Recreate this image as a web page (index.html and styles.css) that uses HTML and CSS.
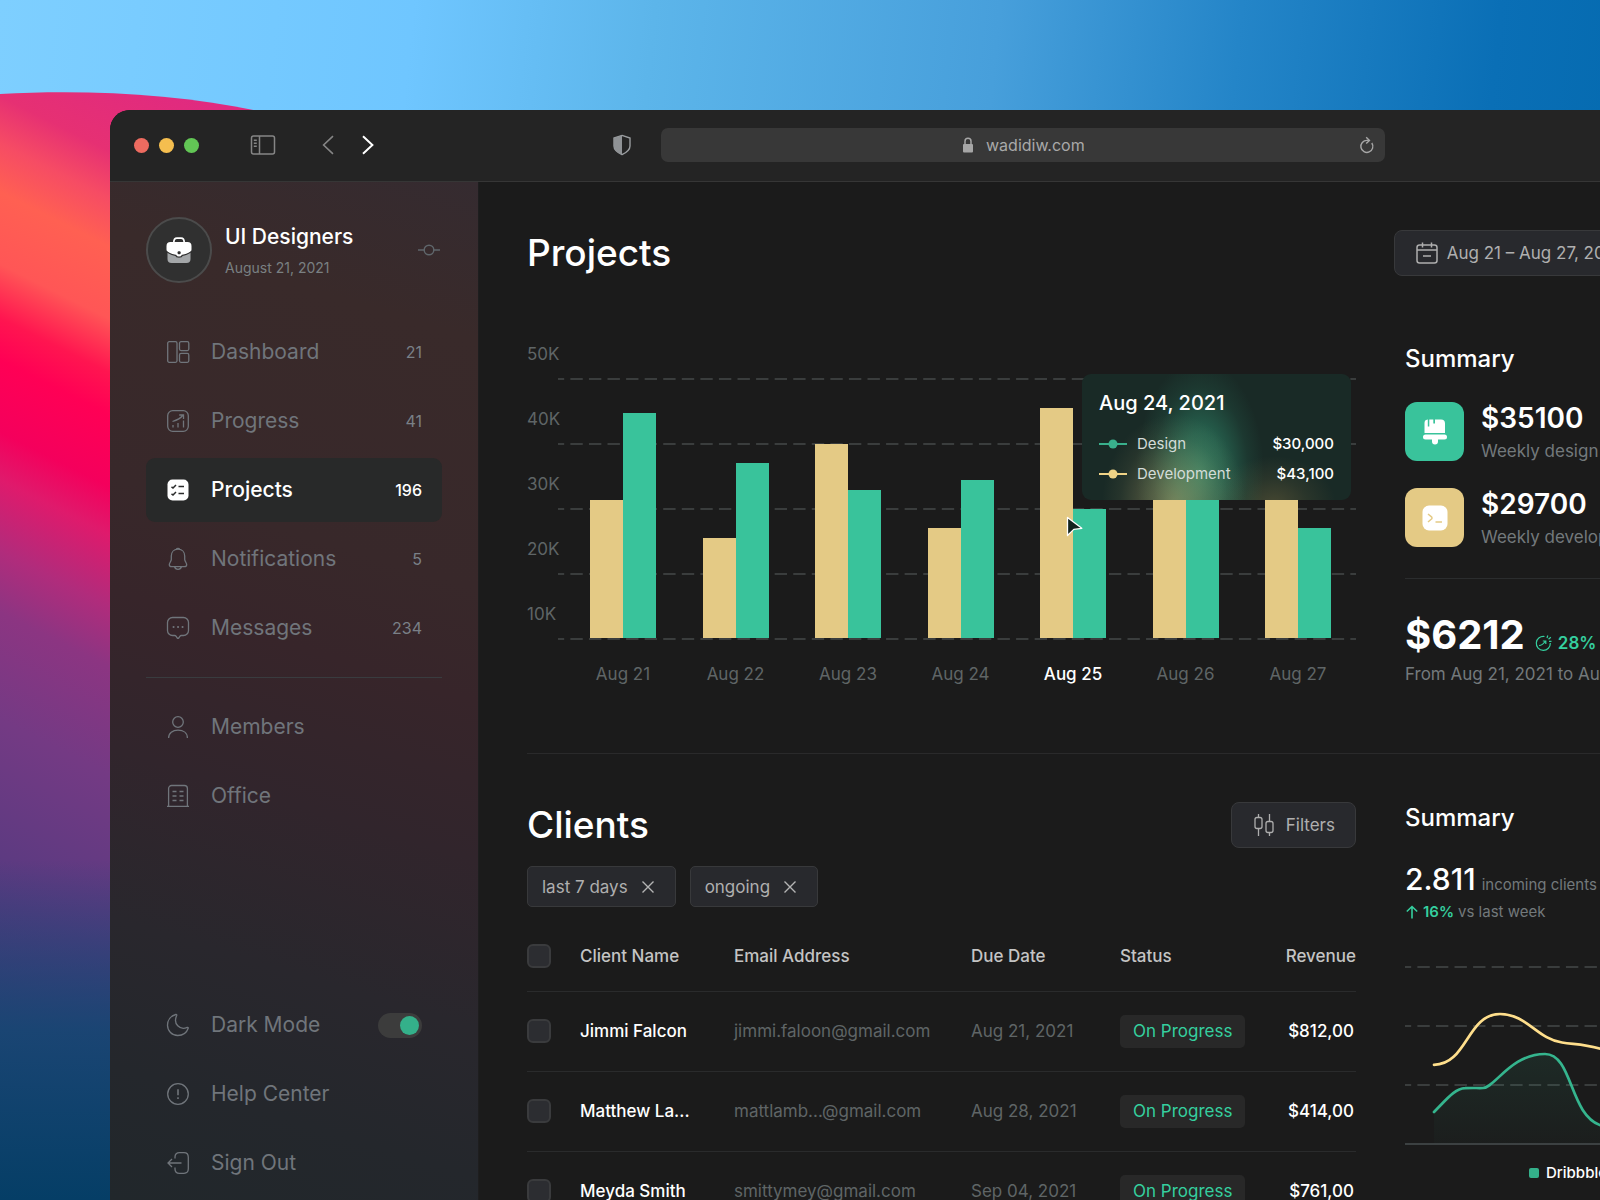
FILE: index.html
```html
<!DOCTYPE html>
<html lang="en">
<head>
<meta charset="utf-8">
<title>Projects</title>
<link rel="stylesheet" href="styles.css">
</head>
<body>
<svg class="wallpaper-wave" viewBox="0 0 400 1200" preserveAspectRatio="none" aria-hidden="true">
  <defs>
    <linearGradient id="wave" gradientUnits="userSpaceOnUse" x1="0" y1="0" x2="-480" y2="960">
      <stop offset="0" stop-color="#e02a80"/>
      <stop offset=".08" stop-color="#e63073"/>
      <stop offset=".12" stop-color="#f64c64"/>
      <stop offset=".16" stop-color="#ff6052"/>
      <stop offset=".22" stop-color="#ff5656"/>
      <stop offset=".265" stop-color="#ff1550"/>
      <stop offset=".3" stop-color="#ff0055"/>
      <stop offset=".36" stop-color="#f4005c"/>
      <stop offset=".4" stop-color="#df1a6c"/>
      <stop offset=".46" stop-color="#b02c7c"/>
      <stop offset=".51" stop-color="#8c3582"/>
      <stop offset=".6" stop-color="#743a84"/>
      <stop offset=".75" stop-color="#563a80"/>
      <stop offset="1" stop-color="#303c78"/>
    </linearGradient>
    <linearGradient id="deep" gradientUnits="userSpaceOnUse" x1="0" y1="860" x2="0" y2="1200">
      <stop offset="0" stop-color="#154672" stop-opacity="0"/>
      <stop offset=".5" stop-color="#154672" stop-opacity=".9"/>
      <stop offset="1" stop-color="#053e66"/>
    </linearGradient>
  </defs>
  <path d="M0 94C85 89 180 94 258 111L400 150V1200H0Z" fill="url(#wave)"/>
  <path d="M0 860H400V1200H0Z" fill="url(#deep)"/>
</svg>

<div class="window">
  <header class="titlebar">
    <div class="lights"><i class="light red"></i><i class="light yellow"></i><i class="light green"></i></div>
    <button class="bar-button panel" aria-label="Toggle sidebar">
      <svg width="26" height="20" viewBox="0 0 26 20" fill="none" stroke="#858585" stroke-width="1.5"><rect x="1.5" y="1" width="23" height="18" rx="2"/><path d="M9.5 1v18M3.8 5.2h3M3.8 8.2h3M3.8 11.2h3" /></svg>
    </button>
    <div class="history">
      <button class="bar-button" aria-label="Back"><svg width="12" height="20" viewBox="0 0 12 20" fill="none" stroke="#858585" stroke-width="1.6"><path d="M11 1.2 1.6 10 11 18.8"/></svg></button>
      <button class="bar-button" aria-label="Forward"><svg width="12" height="20" viewBox="0 0 12 20" fill="none" stroke="#fff" stroke-width="2"><path d="M1 1.2 10.4 10 1 18.8"/></svg></button>
    </div>
    <button class="bar-button shield" aria-label="Privacy report">
      <svg width="18" height="22" viewBox="0 0 18 22"><path d="M9 1.4 17 4v8c0 4-3.5 6.5-8 8.6C4.5 18.5 1 16 1 12V4Z" fill="none" stroke="#9a9da0" stroke-width="1.4"/><path d="M9 1.4 1 4v8c0 4 3.5 6.5 8 8.6Z" fill="#8f9295"/></svg>
    </button>
    <div class="address">
      <label class="address-field">
        <svg width="12" height="16" viewBox="0 0 12 16"><path d="M3 7V4.3a3 3 0 0 1 6 0V7" fill="none" stroke="#a6a6a6" stroke-width="1.5"/><rect x="1" y="7" width="10" height="8.4" rx="1" fill="#a6a6a6"/></svg>
        <input type="text" value="wadidiw.com" aria-label="Address">
      </label>
      <button class="bar-button" aria-label="Reload">
        <svg width="16" height="18" viewBox="0 0 16 18" fill="none" stroke="#a6a6a6" stroke-width="1.4"><path d="M12.8 7A6 6 0 1 1 8 4.400H10.300"/><path d="M7.200 1.200 10.500 4.400 7.200 7.600"/></svg>
      </button>
    </div>
  </header>

  <div class="app">
    <aside class="sidebar">
      <div class="profile">
        <div class="avatar">
          <svg width="26" height="27" viewBox="0 0 26 27"><path d="M1.5 13.5V22a4 4 0 0 0 4 4h15a4 4 0 0 0 4-4v-8.5Z" fill="#a3a6a8"/><path d="M7.8 5.5C7.8 2.5 8.8 1.2 11 1.2h4c2.2 0 3.2 1.3 3.2 4.3" fill="none" stroke="#fff" stroke-width="1.7"/><path d="M4.5 5h17A4 4 0 0 1 25.500 9v3.5c0 2-1.5 3.2-3.5 4L15.500 19a3 3 0 0 1-5 0L4 16.500c-2-.8-3.500-2-3.500-4V9a4 4 0 0 1 4-4Z" fill="#fff"/><path d="M.8 14.5C2 16.500 6 17.500 9.800 18.500c.6 2.200 5.800 2.200 6.400 0 3.800-1 7.800-2 9-4" fill="none" stroke="#303030" stroke-width="1.3"/><rect x="11.6" y="14.2" width="3" height="3" rx="1" fill="#303030"/></svg>
        </div>
        <div class="profile-text">
          <strong>UI Designers</strong>
          <time>August 21, 2021</time>
        </div>
        <button class="bar-button" aria-label="Switch team"><svg width="22" height="12" viewBox="0 0 22 12" fill="none" stroke="#5f666b" stroke-width="1.4"><circle cx="11" cy="6" r="4.8"/><path d="M0 6h6.200M15.800 6H22"/></svg></button>
      </div>

      <nav class="menu">
        <a href="#dashboard"><svg class="icon" viewBox="0 0 24 24"><rect x="1.7" y="1.7" width="9.3" height="20.6" rx="1.5"/><rect x="13.5" y="1.7" width="9.3" height="8.9" rx="1.5"/><rect x="13.5" y="13.4" width="9.3" height="8.9" rx="1.5"/></svg><span>Dashboard</span><b>21</b></a>
        <a href="#progress"><svg class="icon" viewBox="0 0 24 24"><rect x="1.7" y="1.7" width="20.6" height="20.6" rx="5"/><path d="M7 16v2.500M12 14v4.500M17.500 11.500v7M6.500 12.500C10 11.500 14.500 9.500 17 6M13.200 6h4.300v4"/></svg><span>Progress</span><b>41</b></a>
        <a href="#projects" class="active" aria-current="page"><svg class="icon" viewBox="0 0 24 24"><rect x="1.5" y="1.5" width="21" height="21" rx="5" fill="#fff" stroke="none"/><path d="M5.500 8.800 7 10l3-3M12.500 8.500H18M5.500 15.800 7 17l3-3M12.500 15.500H18" stroke="#2a2b2b" stroke-width="1.5"/></svg><span>Projects</span><b>196</b></a>
        <a href="#notifications"><svg class="icon" viewBox="0 0 24 24"><path d="M12 2.200c-4 0-6.700 2.800-6.700 6.800v3.500c0 1.500-2 3.600-2 5.200 0 1.300 1.200 1.900 2.500 1.900h12.400c1.300 0 2.500-.6 2.500-1.900 0-1.600-2-3.700-2-5.200V9c0-4-2.700-6.800-6.700-6.800ZM10.300 2.400c.4-1.300 3-1.300 3.400 0M8.500 19.800c1 3.300 6 3.300 7 0"/></svg><span>Notifications</span><b>5</b></a>
        <a href="#messages"><svg class="icon" viewBox="0 0 24 24"><path d="M6.500 1.500h11a5 5 0 0 1 5 5v8a5 5 0 0 1-5 5h-2.200c-.8 0-1 .2-1.500.8L12.700 22c-.4.500-1 .5-1.400 0l-1.100-1.700c-.5-.6-.7-.8-1.500-.8H6.500a5 5 0 0 1-5-5v-8a5 5 0 0 1 5-5Z"/><path d="M7.500 11h.1M12 11h.1M16.500 11h.1" stroke-width="2" stroke-linecap="round"/></svg><span>Messages</span><b>234</b></a>
      </nav>
      <hr>
      <nav class="menu">
        <a href="#members"><svg class="icon" viewBox="0 0 24 24"><circle cx="12" cy="7" r="5.3"/><path d="M2.600 23c0-5 4-7.800 9.400-7.800s9.400 2.800 9.400 7.800"/></svg><span>Members</span></a>
        <a href="#office"><svg class="icon" viewBox="0 0 24 24"><path d="M1 22.300h22M2.600 22V4.500a3 3 0 0 1 3-3h12.800a3 3 0 0 1 3 3V22M6.500 7.500h4M13.500 7.500h4M6.500 12h4M13.500 12h4M6.500 16.500h4M13.500 16.500h4"/></svg><span>Office</span></a>
      </nav>
      <nav class="menu menu-bottom">
        <label><svg class="icon" viewBox="0 0 24 24"><path d="M9.800 1.500C4.500 3 1.500 7.500 1.500 12.300c0 5.700 4.500 10.200 10.200 10.200 4.800 0 9-2.800 10.500-7.200.2-.8-.3-1.200-1-.9C14 17.500 6.700 11 10.700 2.500c.3-.7-.1-1.200-.9-1Z"/></svg><span>Dark Mode</span><input class="switch" type="checkbox" checked></label>
        <a href="#help"><svg class="icon" viewBox="0 0 24 24"><circle cx="12" cy="12" r="10.3"/><path d="M12 7.300v6M12 15.300v1.600" stroke-width="1.6"/></svg><span>Help Center</span></a>
        <a href="#sign-out"><svg class="icon" viewBox="0 0 24 24"><path d="M9 7.500V6c0-2.800 1.700-4.300 4.500-4.300H18c2.800 0 4.300 1.700 4.300 4.500v11.600c0 2.800-1.500 4.500-4.300 4.500h-4.500C10.700 22.300 9 20.800 9 18v-1.500M15.500 12H2M6 8l-4 4 4 4"/></svg><span>Sign Out</span></a>
      </nav>
    </aside>

    <main class="content">
      <section class="panel-row projects">
        <div class="section-head">
          <h1>Projects</h1>
          <button class="button date-button">
            <svg width="24" height="24" viewBox="0 0 24 24" fill="none" stroke="#aeaeae" stroke-width="1.5"><rect x="2" y="4" width="20" height="18" rx="2.5"/><path d="M2 9h20M7.500 1.500v5M16.500 1.500v5M8 15h8"/></svg>
            Aug 21 – Aug 27, 2021
          </button>
        </div>

        <div class="chart">
          <div class="scale">
            <div class="scale-row"><span>50K</span><svg class="dash"><line x1="0" y1="1" x2="100%" y2="1"/></svg></div>
            <div class="scale-row"><span>40K</span><svg class="dash"><line x1="0" y1="1" x2="100%" y2="1"/></svg></div>
            <div class="scale-row"><span>30K</span><svg class="dash"><line x1="0" y1="1" x2="100%" y2="1"/></svg></div>
            <div class="scale-row"><span>20K</span><svg class="dash"><line x1="0" y1="1" x2="100%" y2="1"/></svg></div>
            <div class="scale-row"><span>10K</span><svg class="dash"><line x1="0" y1="1" x2="100%" y2="1"/></svg></div>
          </div>
          <div class="bars">
            <div class="pair"><i class="dev" style="height:138px"></i><i class="des" style="height:225px"></i></div>
            <div class="pair"><i class="dev" style="height:100px"></i><i class="des" style="height:175px"></i></div>
            <div class="pair"><i class="dev" style="height:194px"></i><i class="des" style="height:148px"></i></div>
            <div class="pair"><i class="dev" style="height:110px"></i><i class="des" style="height:158px"></i></div>
            <div class="pair"><i class="dev" style="height:230px"></i><i class="des" style="height:129px"></i></div>
            <div class="pair"><i class="dev" style="height:194px"></i><i class="des" style="height:235px"></i></div>
            <div class="pair"><i class="dev" style="height:148px"></i><i class="des" style="height:110px"></i></div>
          </div>
          <div class="days"><span>Aug 21</span><span>Aug 22</span><span>Aug 23</span><span>Aug 24</span><span class="current">Aug 25</span><span>Aug 26</span><span>Aug 27</span></div>
          <div class="tooltip">
            <h3>Aug 24, 2021</h3>
            <div class="tip-row"><svg width="28" height="10" viewBox="0 0 28 10" fill="#39b08c"><path d="M0 4h28v2H0z"/><circle cx="14" cy="5" r="4.5"/></svg><span>Design</span><b>$30,000</b></div>
            <div class="tip-row"><svg width="28" height="10" viewBox="0 0 28 10" fill="#f0d386"><path d="M0 4h28v2H0z"/><circle cx="14" cy="5" r="4.5"/></svg><span>Development</span><b>$43,100</b></div>
          </div>
          <svg class="cursor" width="18" height="22" viewBox="0 0 18 22"><path d="M1.500 1.500 15.800 12.300 7.800 13.400 1.500 19.500Z" fill="#12231e" stroke="#fff" stroke-width="1.3" stroke-linejoin="round"/></svg>
        </div>

        <div class="totals">
          <h2>Summary</h2>
          <div class="total">
            <div class="tile design"><svg width="26" height="28" viewBox="0 0 26 28" fill="#fff"><path d="M2.500 15V5a3.500 3.500 0 0 1 3-3.500h.3v7h1.500v-7h4v4h1.700v-4H19a4 4 0 0 1 4 4V15Z"/><path d="M3.500 16.500h19a2.500 2.500 0 0 1 0 5h-6.500v2a3 3 0 0 1-6 0v-2H3.500a2.500 2.500 0 0 1 0-5Z"/></svg></div>
            <div><strong>$35100</strong><span>Weekly design</span></div>
          </div>
          <div class="total">
            <div class="tile development"><svg width="26" height="26" viewBox="0 0 26 26"><rect x=".5" y=".5" width="25" height="25" rx="6.5" fill="#fff"/><path d="M6 9l3.500 2.800a1.500 1.500 0 0 1 0 2.200L6 17M13.500 17H20" fill="none" stroke="#e4ca85" stroke-width="1.5"/></svg></div>
            <div><strong>$29700</strong><span>Weekly development</span></div>
          </div>
          <hr>
          <div class="grand"><strong>$6212</strong><svg width="18" height="18" viewBox="0 0 18 18" fill="none" stroke="#35cf9f" stroke-width="1.2"><path d="M9.500 2.500A7 7 0 1 0 15.300 9"/><path d="M4 11.500c3 0 4.500-1.500 6.500-4.500M7.800 7h3v3M12 4l.8-2.500M13.500 5.300l2.300-2M14 7.300h2.500"/></svg><em>28%</em></div>
          <p>From Aug 21, 2021 to Aug 27</p>
        </div>
      </section>

      <section class="panel-row clients">
        <div class="client-list">
          <div class="section-head">
            <h1>Clients</h1>
            <button class="button filter-button">
              <svg width="24" height="24" viewBox="0 0 24 24" fill="none" stroke="#aeaeae" stroke-width="1.3"><rect x="3" y="4.5" width="7" height="11" rx="2"/><rect x="14" y="8.5" width="7" height="11" rx="2"/><path d="M6.500 1v3.500M6.500 15.500V23M17.500 1v7.500M17.500 19.500V23"/></svg>
              Filters
            </button>
          </div>
          <div class="chips">
            <button class="button chip">last 7 days <svg width="12" height="12" viewBox="0 0 12 12" stroke="#b4b4b4" stroke-width="1.4"><path d="M.5.5l11 11M11.500.5.5 11.500"/></svg></button>
            <button class="button chip">ongoing <svg width="12" height="12" viewBox="0 0 12 12" stroke="#b4b4b4" stroke-width="1.4"><path d="M.5.5l11 11M11.500.5.5 11.500"/></svg></button>
          </div>
          <table>
            <colgroup><col class="c-check"><col class="c-name"><col class="c-mail"><col class="c-date"><col><col class="c-revenue"></colgroup>
            <thead>
              <tr><th><input type="checkbox" aria-label="Select all"></th><th>Client Name</th><th>Email Address</th><th>Due Date</th><th>Status</th><th>Revenue</th></tr>
            </thead>
            <tbody>
              <tr><td><input type="checkbox" aria-label="Select Jimmi Falcon"></td><td>Jimmi Falcon</td><td>jimmi.faloon@gmail.com</td><td>Aug 21, 2021</td><td><span class="badge">On Progress</span></td><td>$812,00</td></tr>
              <tr><td><input type="checkbox" aria-label="Select Matthew"></td><td>Matthew La...</td><td>mattlamb...@gmail.com</td><td>Aug 28, 2021</td><td><span class="badge">On Progress</span></td><td>$414,00</td></tr>
              <tr><td><input type="checkbox" aria-label="Select Meyda Smith"></td><td>Meyda Smith</td><td>smittymey@gmail.com</td><td>Sep 04, 2021</td><td><span class="badge">On Progress</span></td><td>$761,00</td></tr>
            </tbody>
          </table>
        </div>

        <div class="incoming">
          <h2>Summary</h2>
          <div class="count"><strong>2.811</strong><span>incoming clients</span></div>
          <div class="change"><svg width="14" height="14" viewBox="0 0 14 14" fill="none" stroke="#35cf9f" stroke-width="1.6"><path d="M7 13.500V1.500M1.800 6.500 7 1.500l5.200 5"/></svg><em>16%</em><span>vs last week</span></div>
          <svg class="trend" width="256" height="180" viewBox="0 0 256 180" fill="none">
            <defs><linearGradient id="fade" x1="0" y1="0" x2="0" y2="1"><stop offset="0" stop-color="#35b58e" stop-opacity=".1"/><stop offset="1" stop-color="#35b58e" stop-opacity=".02"/></linearGradient></defs>
            <path class="trend-grid" d="M0 2H256M0 61H256M0 120H256"/>
            <path d="M0 179H256" stroke="#3c4142" stroke-width="2"/>
            <path d="M29 147C42 134 50 123.500 60 123.200C68 122.700 72 123.200 78 123C90 122.500 106 89 140 89C168 89 164 150 196 160.500C216 167 232 150 256 130V178H29Z" fill="url(#fade)"/>
            <path d="M29 147C42 134 50 123.500 60 123.200C68 122.700 72 123.200 78 123C90 122.500 106 89 140 89C168 89 164 150 196 160.500C216 167 232 150 256 130" stroke="#35b58e" stroke-width="2.7" stroke-linecap="round"/>
            <path d="M29 99.800C62 99.800 62 49 95 49C122 49 132 74 157 77.500C170 79.500 178 78.500 196 84C216 91 236 84 256 70" stroke="#ffdf8c" stroke-width="2.7" stroke-linecap="round"/>
          </svg>
          <div class="legend"><i></i>Dribbble</div>
        </div>
      </section>
    </main>
  </div>
</div>
</body>
</html>
```
FILE: styles.css
```css
* { box-sizing: border-box; }

body {
  display: flow-root;
  margin: 0;
  height: 100vh;
  overflow: hidden;
  position: relative;
  font-family: Inter, "Liberation Sans", sans-serif;
  font-size: 17px;
  line-height: 24px;
  color: #fff;
  background: linear-gradient(96deg, #7ecfff 0%, #6fc6ff 24%, #5cb5ea 38%, #479fdb 58%, #2485c8 72%, #0a6fb6 87%, #0268ac 100%);
}

h1, h2, h3, p { margin: 0; font-weight: 500; }
h1 { font-size: 37px; line-height: 46px; }
h2 { font-size: 24px; line-height: 30px; }
p { font-weight: 400; }
hr { width: 100%; height: 1px; margin: 0; border: 0; background: #2b2d2e; }
a { color: inherit; text-decoration: none; }
em { font-style: normal; }
button, input { font: inherit; color: inherit; }
svg { flex: none; }

.wallpaper-wave { position: absolute; left: 0; top: 0; width: 400px; height: 100%; }

/* Browser window */
.window {
  position: relative;
  margin: 110px -108px 0 110px;
  height: calc(100vh - 110px);
  display: flex;
  flex-direction: column;
  overflow: hidden;
  border-radius: 20px 0 0 0;
  background: #1b1b1b;
}

.titlebar {
  flex: none;
  display: flex;
  align-items: center;
  height: 72px;
  padding: 0 323px 1px 24px;
  background: #242424;
  border-bottom: 1px solid #363636;
}
.lights { display: flex; gap: 10px; }
.light { width: 15px; height: 15px; border-radius: 50%; }
.red { background: #ed6b60; }
.yellow { background: #f5be4f; }
.green { background: #62c655; }
.bar-button { display: flex; padding: 0; border: 0; background: none; }
.panel { margin-left: 51px; }
.history { display: flex; gap: 28px; margin-left: 46px; }
.shield { margin: 0 30px 0 239px; }
.address {
  flex: 1;
  display: flex;
  align-items: center;
  height: 34px;
  padding: 0 10px 0 26px;
  border-radius: 7px;
  background: #383838;
}
.address-field { flex: 1; display: flex; align-items: center; justify-content: center; gap: 12px; }
.address input { width: 98px; padding: 0; border: 0; outline: 0; background: none; color: #a9a9a9; font-size: 16px; }

.app { flex: 1; min-height: 0; display: flex; }

/* Sidebar */
.sidebar {
  flex: none;
  width: 369px;
  display: flex;
  flex-direction: column;
  padding: 35px 36px 5px;
  border-right: 1px solid #1e1e1f;
  background: linear-gradient(197deg, #352b30 0%, #392a2a 14%, #38282a 36%, #37252a 46%, #31252c 60%, #29272d 75%, #24272c 88%, #21272b 100%);
}
.profile { display: flex; align-items: center; margin-bottom: 37px; padding-right: 2px; }
.avatar {
  flex: none;
  display: grid;
  place-items: center;
  width: 66px;
  height: 66px;
  border: 2px solid #4b4b4b;
  border-radius: 50%;
  background: #303030;
}
.profile-text { flex: 1; display: flex; flex-direction: column; gap: 7px; margin-left: 13px; padding-top: 5px; }
.profile-text strong { font-size: 21px; font-weight: 500; }
.profile-text time { font-size: 14px; color: #7a8082; }

.menu { display: flex; flex-direction: column; gap: 5px; }
.menu a, .menu label {
  display: flex;
  align-items: center;
  height: 64px;
  padding: 0 20px;
  border-radius: 9px;
  color: #70757b;
  font-size: 21px;
}
.menu span { flex: 1; margin-left: 21px; }
.menu b { font-size: 16px; font-weight: 400; color: #7a8087; }
.icon { width: 24px; height: 24px; fill: none; stroke: currentColor; stroke-width: 1.3; }
.menu .active { background: #282929; color: #fff; }
.menu .active span { font-weight: 500; }
.menu .active b { color: #fff; font-weight: 500; }
.sidebar hr { margin: 17px 0; background: #393c3f; }
.menu-bottom { margin-top: auto; }
.switch {
  appearance: none;
  display: flex;
  justify-content: flex-end;
  width: 44px;
  height: 25px;
  margin: 0;
  padding: 3px;
  border-radius: 13px;
  background: #3c3c3c;
}
.switch::before { content: ""; width: 19px; height: 19px; border-radius: 50%; background: #34b08a; }

/* Content */
.content { flex: 1; min-width: 0; padding: 48px 0 0 48px; }
.panel-row { display: grid; grid-template-columns: minmax(0, 1fr) 256px; column-gap: 49px; padding-right: 47px; }
.section-head { display: flex; justify-content: space-between; align-items: center; height: 46px; }
.projects { padding-bottom: 67px; border-bottom: 1px solid #2a2a2b; }
.projects > .section-head { grid-column: 1 / -1; margin-bottom: 39px; }
.clients { padding-top: 48px; }

.button {
  display: flex;
  align-items: center;
  border: 1px solid #38393b;
  border-radius: 8px;
  background: #28292d;
  color: #afafaf;
}
.date-button { height: 46px; gap: 8px; padding: 0 38px 0 20px; white-space: nowrap; }
.filter-button { height: 46px; gap: 10px; padding: 0 20px; }
.chips { display: flex; gap: 14px; margin: 18px 0 15px; }
.chip { height: 41px; gap: 14px; padding: 0 21px 0 14px; border-radius: 5px; }

/* Bar chart */
.chart { position: relative; display: grid; grid-template-rows: 325px auto; }
.scale { grid-area: 1 / 1; color: #5f6566; }
.scale-row { display: flex; flex-direction: column; justify-content: space-between; height: 65px; padding-top: 27px; }
.dash { width: calc(100% - 31px); height: 2px; margin-left: 31px; }
.dash line, .trend-grid { stroke: #3a3d3d; stroke-width: 2; stroke-dasharray: 12.38 6.19; stroke-dashoffset: 6.19; }
.bars { grid-area: 1 / 1; display: flex; justify-content: space-between; padding: 0 25px 2px 63px; }
.pair { display: flex; align-items: flex-end; }
.pair i { width: 33px; }
.dev { background: #e4ca85; }
.des { background: #39c39b; }
.days { display: flex; justify-content: space-between; padding: 22px 25px 0 63px; color: #5f6566; }
.days span { width: 66px; text-align: center; white-space: nowrap; }
.days .current { color: #fff; font-weight: 500; }

.tooltip {
  position: absolute;
  right: 5px;
  top: 59px;
  width: 269px;
  height: 126px;
  padding: 17px;
  border-radius: 9px;
  background:
    radial-gradient(ellipse 72px 90px at 92px 130px, rgba(214, 190, 120, .45) 0%, rgba(214, 190, 120, .28) 35%, rgba(214, 190, 120, .07) 75%, transparent 100%),
    radial-gradient(ellipse 64px 112px at 118px 98px, rgba(57, 180, 138, .55) 0%, rgba(57, 180, 138, .4) 35%, rgba(57, 180, 138, .1) 75%, transparent 100%),
    radial-gradient(ellipse 62px 50px at 192px 132px, rgba(190, 150, 80, .28) 0%, rgba(190, 150, 80, .1) 55%, transparent 100%),
    #192a26;
}
.tooltip h3 { margin-bottom: 14px; font-size: 20px; }
.tip-row { display: flex; align-items: center; gap: 10px; height: 30px; font-size: 15px; color: #d3dcd8; }
.tip-row b { margin-left: auto; font-weight: 500; color: #fff; }
.cursor { position: absolute; left: 65%; top: 201px; }

/* Totals */
.totals { padding-top: 29px; color: #73797b; white-space: nowrap; }
.totals h2 { margin-bottom: 28px; color: #fff; }
.total { display: flex; align-items: center; gap: 17px; height: 59px; margin-bottom: 27px; }
.total strong, .total span { display: block; }
.total strong { margin-bottom: 4px; font-size: 28px; font-weight: 600; line-height: 34px; color: #fff; }
.tile { flex: none; display: grid; place-items: center; width: 59px; height: 59px; border-radius: 12px; }
.design { background: #39c39b; }
.development { background: #e4ca85; }
.totals hr { margin: 31px 0 32px; }
.grand { display: flex; align-items: baseline; height: 51px; line-height: 48px; }
.grand svg { align-self: center; margin: 12px 5px 0 10px; }
.grand strong { font-size: 40px; font-weight: 700; color: #fff; }
em { font-weight: 600; color: #35cf9f; }

/* Clients table */
table { width: 100%; border-collapse: collapse; table-layout: fixed; }
.c-check { width: 53px; }
.c-name { width: 154px; }
.c-mail { width: 237px; }
.c-date { width: 149px; }
.c-revenue { width: 100px; }
th, td { height: 80px; padding: 0; text-align: left; font-weight: 400; white-space: nowrap; border-bottom: 1px solid #2a2b2c; color: #5f6566; }
th { height: 69px; font-weight: 500; color: #c4c4c4; }
th:last-child, td:last-child { text-align: right; }
td:last-child { padding-right: 2px; }
td:nth-child(2), td:last-child { font-weight: 500; color: #fff; }
table input {
  appearance: none;
  display: block;
  width: 24px;
  height: 24px;
  margin: 0;
  border: 2px solid #3a3b3d;
  border-radius: 6px;
  background: #2c2d31;
}
.badge { display: inline-block; padding: 5px 13px; line-height: 23px; border-radius: 5px; background: #282828; color: #35cf9f; }

/* Incoming clients */
.incoming { color: #73797b; font-size: 15px; white-space: nowrap; padding-top: 1px; }
.incoming h2 { margin-bottom: 28px; color: #fff; }
.count { display: flex; align-items: baseline; gap: 6px; height: 36px; line-height: 36px; }
.count strong { font-size: 30px; font-weight: 500; color: #fff; }
.change { display: flex; align-items: center; gap: 4px; margin-top: 3px; }
.trend { display: block; margin-top: 41px; }
.trend-grid { fill: none; }
.legend { display: flex; align-items: center; gap: 7px; margin-top: 16px; padding-left: 124px; color: #fff; font-weight: 500; }
.legend i { width: 10px; height: 10px; border-radius: 2px; background: #34b08a; }
```
